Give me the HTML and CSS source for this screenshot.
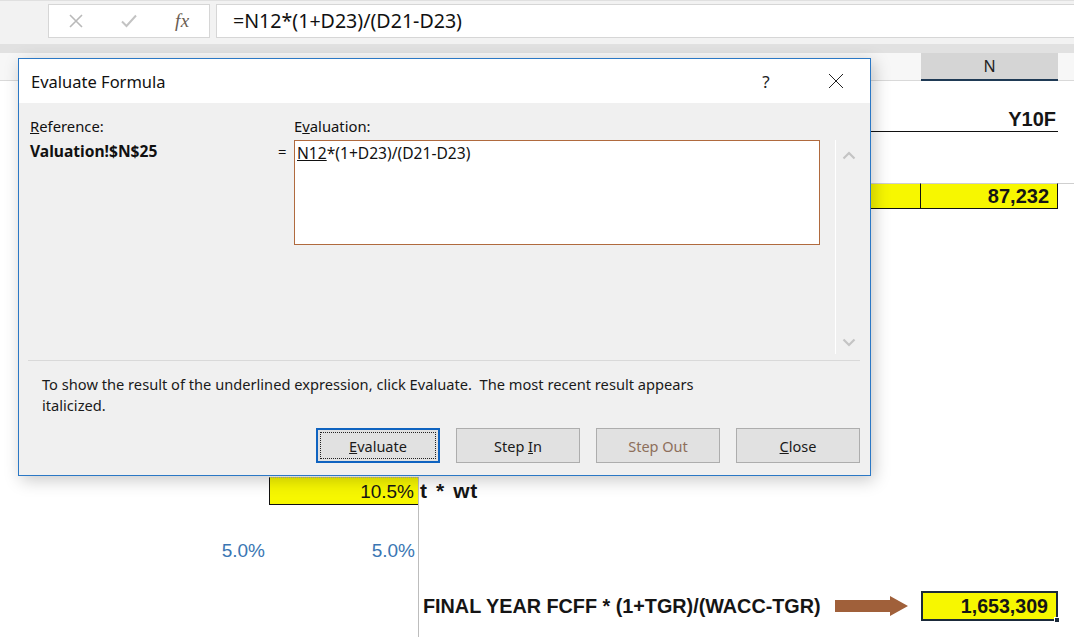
FILE: index.html
```html
<!DOCTYPE html>
<html>
<head>
<meta charset="utf-8">
<link rel="stylesheet" href="styles.css">
</head>
<body>
<div class="app">
  <div class="formula-bar">
    <div class="fx-box">
      <span class="ico">
        <svg width="16" height="16" viewBox="0 0 16 16"><path d="M2 2 L14 14 M14 2 L2 14" stroke="#b9b9b9" stroke-width="1.6" fill="none"/></svg>
      </span>
      <span class="ico">
        <svg width="18" height="16" viewBox="0 0 18 16"><path d="M2 8.5 L6.5 13 L16 2.5" stroke="#c3c3c3" stroke-width="2" fill="none"/></svg>
      </span>
      <span class="ico fx">fx</span>
    </div>
    <div class="formula-input">=N12*(1+D23)/(D21-D23)</div>
  </div>
  <div class="band"></div>

  <div class="sheet">
    <div class="hdr"></div>
    <div class="hdr-n">N</div>

    <div class="c-y10f-m"></div>
    <div class="c-y10f">Y10F</div>

    <div class="row5-line"></div>
    <div class="c-yel-m"></div>
    <div class="c-yel-n">87,232</div>

    <div class="vline"></div>
    <div class="c-rate">10.5%</div>
    <div class="c-wt">t * wt</div>

    <div class="c-pct1">5.0%</div>
    <div class="c-pct2">5.0%</div>

    <div class="c-final">
      <span>FINAL YEAR FCFF * (1+TGR)/(WACC-TGR)</span>
      <svg class="arrow" width="73" height="20" viewBox="0 0 73 20"><path d="M0 4 H55 V0 L73 10 L55 20 V16 H0 Z" fill="#a0603a"/></svg>
    </div>
    <div class="c-tv">1,653,309<i class="handle"></i></div>
  </div>

  <div class="dialog">
    <div class="dlg-title">
      <span class="dlg-name">Evaluate Formula</span>
      <span class="cap help">?</span>
      <span class="cap close">
        <svg width="16" height="16" viewBox="0 0 16 16"><path d="M1 1 L15 15 M15 1 L1 15" stroke="#222" stroke-width="1" fill="none"/></svg>
      </span>
    </div>
    <div class="dlg-body">
      <div class="dlg-grid">
        <div class="lbl"><u>R</u>eference:</div>
        <div></div>
        <div class="lbl">E<u>v</u>aluation:</div>
        <div></div>
        <div class="refval">Valuation!$N$25</div>
        <div class="eq">=</div>
        <div class="evalbox"><u>N12</u>*(1+D23)/(D21-D23)</div>
        <div class="scroll">
          <svg width="14" height="9" viewBox="0 0 14 9"><path d="M1.5 7.5 L7 2 L12.5 7.5" stroke="#c4c4c4" stroke-width="2.2" fill="none"/></svg>
          <svg width="14" height="9" viewBox="0 0 14 9"><path d="M1.5 1.5 L7 7 L12.5 1.5" stroke="#c4c4c4" stroke-width="2.2" fill="none"/></svg>
        </div>
      </div>
      <div class="sep"></div>
      <p class="msg">To show the result of the underlined expression, click Evaluate.&nbsp; The most recent result appears<br>italicized.</p>
      <div class="btns">
        <div class="btn primary"><span class="focus"><span><u>E</u>valuate</span></span></div>
        <div class="btn"><span>Step <u>I</u>n</span></div>
        <div class="btn disabled"><span>Step Out</span></div>
        <div class="btn"><span><u>C</u>lose</span></div>
      </div>
    </div>
  </div>
</div>
</body>
</html>
```

FILE: styles.css
```css
* { box-sizing: border-box; }
html, body { margin: 0; padding: 0; }
body {
  width: 1074px;
  height: 637px;
  overflow: hidden;
  background: #ffffff;
  font-family: "Liberation Sans", Arial, sans-serif;
}
.app { position: relative; width: 1074px; height: 637px; }

/* formula bar */
.formula-bar {
  height: 44px;
  background: #f2f2f2;
  border-top: 1px solid #e0e0e0;
  display: flex;
  align-items: flex-start;
  gap: 6px;
  padding: 3px 0 0 48px;
}
.fx-box {
  width: 162px;
  height: 34px;
  background: #fff;
  border: 1px solid #d6d6d6;
  display: flex;
}
.ico {
  width: 54px;
  display: flex;
  align-items: center;
  justify-content: center;
}
.fx {
  font-family: "Liberation Serif", "Times New Roman", serif;
  font-style: italic;
  font-size: 19px;
  color: #6a5d52;
  letter-spacing: 0.5px;
}
.formula-input {
  flex: 1;
  height: 34px;
  background: #fff;
  border: 1px solid #d6d6d6;
  border-right: 0;
  padding-left: 16px;
  font-family: "Noto Sans", "Open Sans", sans-serif;
  font-size: 19.6px;
  line-height: 31px;
  color: #111;
}
.band { height: 9px; background: #e1e1e1; }

/* sheet */
.sheet {
  display: grid;
  grid-template-columns: 269px 149px 353px 150px 137px 16px;
  grid-template-rows: 28px 25px 26px 51px 26px 268px 28px 32px 28px 26px 30px 16px;
}
.hdr {
  grid-row: 1;
  grid-column: 1 / -1;
  background: #f7f7f7;
  border-bottom: 1px solid #d9d9d9;
}
.hdr-n {
  grid-row: 1;
  grid-column: 5;
  background: #d5d5d5;
  border-bottom: 2px solid #1f3a55;
  text-align: center;
  font-family: "Noto Sans", sans-serif;
  font-size: 16px;
  line-height: 27px;
  color: #222;
}
.c-y10f-m { grid-row: 3; grid-column: 4; border-bottom: 1px solid #111; }
.c-y10f {
  grid-row: 3;
  grid-column: 5;
  border-bottom: 1px solid #111;
  text-align: right;
  padding-right: 2px;
  font-weight: bold;
  font-size: 20px;
  line-height: 26px;
  color: #151515;
}
.row5-line { grid-row: 5; grid-column: 4 / -1; border-top: 1px solid #cfcfcf; }
.c-yel-m {
  grid-row: 5;
  grid-column: 4;
  background: #f7f700;
  border-top: 1px solid #cfcfcf;
  border-bottom: 1px solid #111;
  border-right: 1px solid #111;
}
.c-yel-n {
  grid-row: 5;
  grid-column: 5;
  background: #f7f700;
  border-top: 1px solid #cfcfcf;
  border-bottom: 1px solid #111;
  border-right: 1px solid #111;
  text-align: right;
  padding-right: 8px;
  font-weight: bold;
  font-size: 20px;
  line-height: 25px;
  color: #151515;
}
.vline { grid-row: 7 / -1; grid-column: 3; border-left: 1px solid #bdbdbd; }
.c-rate {
  grid-row: 7;
  grid-column: 2;
  background: #f7f700;
  border-left: 1px solid #111;
  border-bottom: 1px solid #111;
  border-top: 1px dotted #a8a8a8;
  text-align: right;
  padding-right: 4px;
  font-size: 19px;
  line-height: 27px;
  color: #161616;
}
.c-wt {
  grid-row: 7;
  grid-column: 3 / 5;
  padding-left: 2px;
  font-weight: bold;
  font-size: 21px;
  letter-spacing: 0.6px;
  word-spacing: 2px;
  line-height: 28px;
  color: #151515;
}
.c-pct1, .c-pct2 {
  grid-row: 9;
  text-align: right;
  font-size: 19px;
  line-height: 28px;
  color: #3a76b3;
}
.c-pct1 { grid-column: 1; padding-right: 4px; }
.c-pct2 { grid-column: 2; padding-right: 3px; }
.c-final {
  grid-row: 11;
  grid-column: 3 / 5;
  display: flex;
  align-items: center;
  justify-content: space-between;
  padding: 0 13px 0 5px;
  font-weight: bold;
  font-size: 19.8px;
  color: #151515;
}
.arrow { display: block; }
.c-tv {
  grid-row: 11;
  grid-column: 5;
  position: relative;
  background: #f7f700;
  border: 2px solid #1b2a3a;
  text-align: right;
  padding-right: 8px;
  font-weight: bold;
  font-size: 19.6px;
  line-height: 26px;
  color: #151515;
}
.handle {
  position: absolute;
  right: -4px;
  bottom: -4px;
  width: 6px;
  height: 6px;
  background: #1b2a3a;
  border: 1px solid #fff;
}

/* dialog */
.dialog {
  position: absolute;
  left: 18px;
  top: 58px;
  width: 853px;
  height: 418px;
  border: 1px solid #2b78c5;
  background: #f0f0f0;
  display: flex;
  flex-direction: column;
  box-shadow: 3px 4px 16px rgba(0, 0, 0, 0.22);
  font-family: "Noto Sans", "Open Sans", sans-serif;
  color: #111;
}
.dlg-title {
  height: 44px;
  background: #fff;
  display: flex;
  align-items: center;
  padding: 0 11px 0 12px;
}
.dlg-name { font-size: 16.5px; flex: 1; }
.cap {
  width: 46px;
  height: 44px;
  display: flex;
  align-items: center;
  justify-content: center;
}
.help { font-size: 17px; color: #222; margin-right: 24px; }
.dlg-body { flex: 1; display: flex; flex-direction: column; }
.dlg-grid {
  display: grid;
  grid-template-columns: 246px 18px 526px 50px;
  grid-template-rows: 20px 214px;
  row-gap: 4px;
  padding: 13px 0 0 11px;
  font-size: 14.8px;
}
.lbl { line-height: 20px; }
.refval { font-weight: bold; font-size: 15.6px; line-height: 22px; }
.eq { line-height: 22px; padding-left: 2px; }
.evalbox {
  height: 105px;
  background: #fff;
  border: 1px solid #b06a3e;
  padding: 1px 2px;
  font-size: 15.6px;
  line-height: 22px;
}
.scroll {
  margin-left: 15px;
  width: 26px;
  border-left: 1px solid #ffffff;
  display: flex;
  flex-direction: column;
  justify-content: space-between;
  align-items: center;
  padding: 11px 0 7px;
}
.sep { margin: 6px 10px 0 9px; border-top: 1px solid #d9d9d9; }
.msg {
  margin: 13px 0 0 23px;
  font-size: 14.65px;
  line-height: 21px;
  color: #1a1a1a;
}
.btns {
  display: flex;
  justify-content: flex-end;
  gap: 16px;
  margin-top: 12px;
  padding-right: 10px;
}
.btn {
  width: 124px;
  height: 35px;
  background: #e1e1e1;
  border: 1px solid #adadad;
  display: flex;
  align-items: center;
  justify-content: center;
  font-size: 14.5px;
  color: #1a1a1a;
}
.btn.primary { border: 2px solid #0f63c0; padding: 2px; }
.focus {
  flex: 1;
  align-self: stretch;
  border: 1px dotted #222;
  display: flex;
  align-items: center;
  justify-content: center;
}
.btn.disabled { color: #8d6f5b; }
```
